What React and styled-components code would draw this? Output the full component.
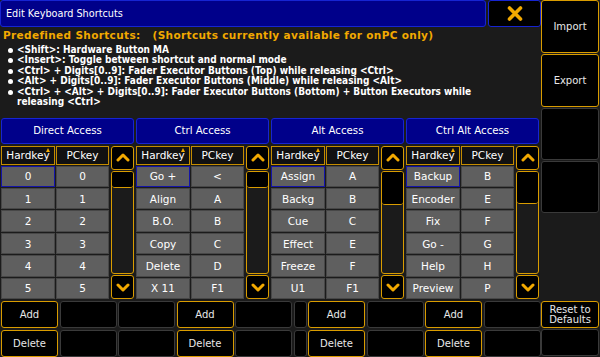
import React from "react";
import styled, { createGlobalStyle } from "styled-components";

const colors = {
  bg: "#1b1b1b",
  orange: "#f2a900",
  gold: "#d99c00",
  navy: "#00008a",
  blue: "#1624d2",
  cell: "#5f5f5f",
  cellEdge: "#474747",
  dim: "#3a3a3a",
  text: "#f2f2f2",
};

const GlobalStyle = createGlobalStyle`
  html, body {
    margin: 0;
    padding: 0;
    background: ${colors.bg};
  }
  body {
    font-family: "DejaVu Sans", "Liberation Sans", sans-serif;
    color: ${colors.text};
  }
`;

const sections = [
  {
    title: "Direct Access",
    thumb: 16,
    rows: [["0", "0"], ["1", "1"], ["2", "2"], ["3", "3"], ["4", "4"], ["5", "5"]],
  },
  {
    title: "Ctrl Access",
    thumb: 16,
    rows: [["Go +", "<"], ["Align", "A"], ["B.O.", "B"], ["Copy", "C"], ["Delete", "D"], ["X 11", "F1"]],
  },
  {
    title: "Alt Access",
    thumb: 33,
    rows: [["Assign", "A"], ["Backg", "B"], ["Cue", "C"], ["Effect", "E"], ["Freeze", "F"], ["U1", "F1"]],
  },
  {
    title: "Ctrl Alt Access",
    thumb: 32,
    rows: [["Backup", "B"], ["Encoder", "E"], ["Fix", "F"], ["Go -", "G"], ["Help", "H"], ["Preview", "P"]],
  },
];

const bullets = [
  "<Shift>: Hardware Button MA",
  "<Insert>: Toggle between shortcut and normal mode",
  "<Ctrl> + Digits[0..9]: Fader Executor Buttons (Top) while releasing <Ctrl>",
  "<Alt> + Digits[0..9]: Fader Executor Buttons (Middle) while releasing <Alt>",
  "<Ctrl> + <Alt> + Digits[0..9]: Fader Executor Buttons (Bottom) + Button Executors while releasing <Ctrl>",
];

// bottom bar: 5 buttons, a narrow stub, 4 buttons (reset sits in the side column)
const bottomTop = ["Add", "", "", "Add", "", null, "Add", "", "Add", ""];
const bottomLow = ["Delete", "", "", "Delete", "", null, "Delete", "", "Delete", ""];

const Chevron = ({ down }) => (
  <svg width="14" height="9" viewBox="0 0 14 9">
    <polyline
      points={down ? "2,2 7,7 12,2" : "2,7 7,2 12,7"}
      fill="none"
      stroke={colors.orange}
      strokeWidth="3"
      strokeLinecap="round"
      strokeLinejoin="round"
    />
  </svg>
);

const CloseIcon = () => (
  <svg width="16" height="15" viewBox="0 0 16 15">
    <path
      d="M2.5 2 L13.5 13 M13.5 2 L2.5 13"
      stroke={colors.orange}
      strokeWidth="3.6"
      strokeLinecap="round"
    />
  </svg>
);

const App = () => {
  return (
    <>
      <GlobalStyle />
      <Screen>
        <Main>
          <TitleRow>
            <TitleBar>Edit Keyboard Shortcuts</TitleBar>
            <CloseButton>
              <CloseIcon />
            </CloseButton>
          </TitleRow>

          <Info>
            <Heading>
              Predefined Shortcuts:&nbsp;&nbsp;&nbsp;(Shortcuts currently available for onPC only)
            </Heading>
            <BulletList>
              {bullets.map((b) => (
                <li key={b}>{b}</li>
              ))}
            </BulletList>
          </Info>

          <Sections>
            {sections.map((s) => (
              <Section key={s.title}>
                <SectionHeader>{s.title}</SectionHeader>
                <SectionBody>
                  <Table>
                    <HeadCell $sorted>Hardkey</HeadCell>
                    <HeadCell>PCkey</HeadCell>
                    {s.rows.map(([hard, pc], i) => (
                      <React.Fragment key={hard}>
                        <Cell $selected={i === 0}>{hard}</Cell>
                        <Cell>{pc}</Cell>
                      </React.Fragment>
                    ))}
                  </Table>
                  <Scrollbar>
                    <ScrollButton>
                      <Chevron />
                    </ScrollButton>
                    <Track>
                      <Thumb $h={s.thumb} />
                    </Track>
                    <ScrollButton>
                      <Chevron down />
                    </ScrollButton>
                  </Scrollbar>
                </SectionBody>
              </Section>
            ))}
          </Sections>

          <BottomBar>
            {bottomTop.map((label, i) =>
              label === null ? <Stub key={"t" + i} /> : (
                <Button key={"t" + i} $accent={!!label}>{label}</Button>
              )
            )}
            {bottomLow.map((label, i) =>
              label === null ? <Stub key={"l" + i} /> : (
                <Button key={"l" + i} $accent={!!label}>{label}</Button>
              )
            )}
          </BottomBar>
        </Main>

        <Side>
          <SideButton $accent $h={53}>Import</SideButton>
          <SideButton $accent $h={53}>Export</SideButton>
          <SideButton $h={52} />
          <SideButton $h={52} />
          <Spacer />
          <SideButton $accent $h={27}>
            Reset to
            <br />
            Defaults
          </SideButton>
          <SideButton $h={27} />
        </Side>
      </Screen>
    </>
  );
};

export default App;

const Screen = styled.div`
  width: 600px;
  height: 357px;
  display: flex;
  background: ${colors.bg};
  overflow: hidden;
`;

const Main = styled.div`
  width: 541px;
  display: flex;
  flex-direction: column;
`;

const TitleRow = styled.div`
  height: 27px;
  display: flex;
  gap: 2px;
`;

const TitleBar = styled.div`
  flex: 1;
  box-sizing: border-box;
  background: ${colors.navy};
  border: 1px solid ${colors.blue};
  border-radius: 3px;
  display: flex;
  align-items: center;
  padding-left: 5px;
  font-size: 9.7px;
  color: #fff;
`;

const CloseButton = styled.div`
  width: 53px;
  box-sizing: border-box;
  background: #000;
  border: 1px solid ${colors.blue};
  border-radius: 3px;
  display: flex;
  align-items: center;
  justify-content: center;
`;

const Info = styled.div`
  height: 91px;
  box-sizing: border-box;
  padding: 2px 0 0 3px;
`;

const Heading = styled.div`
  font-weight: 700;
  font-size: 10.5px;
  line-height: 12px;
  color: ${colors.orange};
  letter-spacing: 0.35px;
`;

const BulletList = styled.ul`
  margin: 4px 0 0 0;
  padding: 0 60px 0 14px;
  list-style: none;
  font-family: "DejaVu Sans Condensed", "DejaVu Sans", sans-serif;
  font-weight: 700;
  font-size: 10px;
  line-height: 10.5px;
  color: #fff;

  li {
    position: relative;
  }

  li::before {
    content: "";
    position: absolute;
    left: -9px;
    top: 3px;
    width: 5px;
    height: 5px;
    border-radius: 50%;
    background: #fff;
  }
`;

const Sections = styled.div`
  height: 182px;
  display: flex;
  gap: 2px;
  padding-left: 1px;
`;

const Section = styled.div`
  width: 133px;
  display: flex;
  flex-direction: column;
`;

const SectionHeader = styled.div`
  height: 26px;
  box-sizing: border-box;
  margin-bottom: 2px;
  background: ${colors.navy};
  border: 1px solid ${colors.blue};
  border-radius: 3px;
  display: flex;
  align-items: center;
  justify-content: center;
  font-size: 10.2px;
  color: #fff;
`;

const SectionBody = styled.div`
  flex: 1;
  display: flex;
  gap: 2px;
`;

const Table = styled.div`
  width: 108px;
  display: grid;
  grid-template-columns: 54px 53px;
  grid-template-rows: 19px repeat(6, 1fr);
  column-gap: 1px;
  row-gap: 1px;
`;

const HeadCell = styled.div`
  position: relative;
  box-sizing: border-box;
  background: #111;
  border: 1px solid #c48c00;
  display: flex;
  align-items: center;
  justify-content: center;
  font-size: 10.5px;
  color: #fff;

  &::after {
    content: "";
    display: ${(p) => (p.$sorted ? "block" : "none")};
    position: absolute;
    top: 1px;
    right: 4px;
    border-left: 2.5px solid transparent;
    border-right: 2.5px solid transparent;
    border-bottom: 4px solid ${colors.orange};
  }
`;

const Cell = styled.div`
  box-sizing: border-box;
  background: ${colors.cell};
  border: 1px solid ${(p) => (p.$selected ? "#1414a8" : colors.cellEdge)};
  display: flex;
  align-items: center;
  justify-content: center;
  font-size: 10.5px;
  color: #fff;
`;

const Scrollbar = styled.div`
  width: 23px;
  display: flex;
  flex-direction: column;
  gap: 1px;
`;

const ScrollButton = styled.div`
  height: 24px;
  box-sizing: border-box;
  background: #000;
  border: 1px solid ${colors.gold};
  border-radius: 3px;
  display: flex;
  align-items: center;
  justify-content: center;
`;

const Track = styled.div`
  flex: 1;
  box-sizing: border-box;
  border: 1px solid ${colors.gold};
  border-radius: 3px;
  background: ${colors.bg};
  overflow: hidden;
`;

const Thumb = styled.div`
  height: ${(p) => p.$h}px;
  box-sizing: border-box;
  background: #000;
  border-bottom: 1px solid ${colors.gold};
  border-radius: 0 0 3px 3px;
`;

const BottomBar = styled.div`
  margin-top: 2px;
  padding-left: 1px;
  display: grid;
  grid-template-columns: repeat(5, 57px) 13px repeat(4, 57px);
  grid-template-rows: 27px 27px;
  column-gap: 1.5px;
  row-gap: 2px;
`;

const Button = styled.div`
  box-sizing: border-box;
  background: #000;
  border: 1px solid ${(p) => (p.$accent ? colors.gold : colors.dim)};
  border-radius: 3px;
  display: flex;
  align-items: center;
  justify-content: center;
  font-size: 10px;
  color: #e8e8e8;
`;

const Stub = styled.div`
  box-sizing: border-box;
  background: #000;
  border: 1px solid ${colors.dim};
  border-radius: 3px;
`;

const Side = styled.div`
  width: 59px;
  box-sizing: border-box;
  padding: 0 1px 1px 0;
  display: flex;
  flex-direction: column;
  gap: 1px;
`;

const SideButton = styled.div`
  height: ${(p) => p.$h}px;
  box-sizing: border-box;
  background: #000;
  border: 1px solid ${(p) => (p.$accent ? colors.gold : colors.dim)};
  border-radius: 3px;
  display: flex;
  align-items: center;
  justify-content: center;
  text-align: center;
  font-size: 10px;
  line-height: 10px;
  color: #e8e8e8;
`;

const Spacer = styled.div`
  flex: 1;
`;
